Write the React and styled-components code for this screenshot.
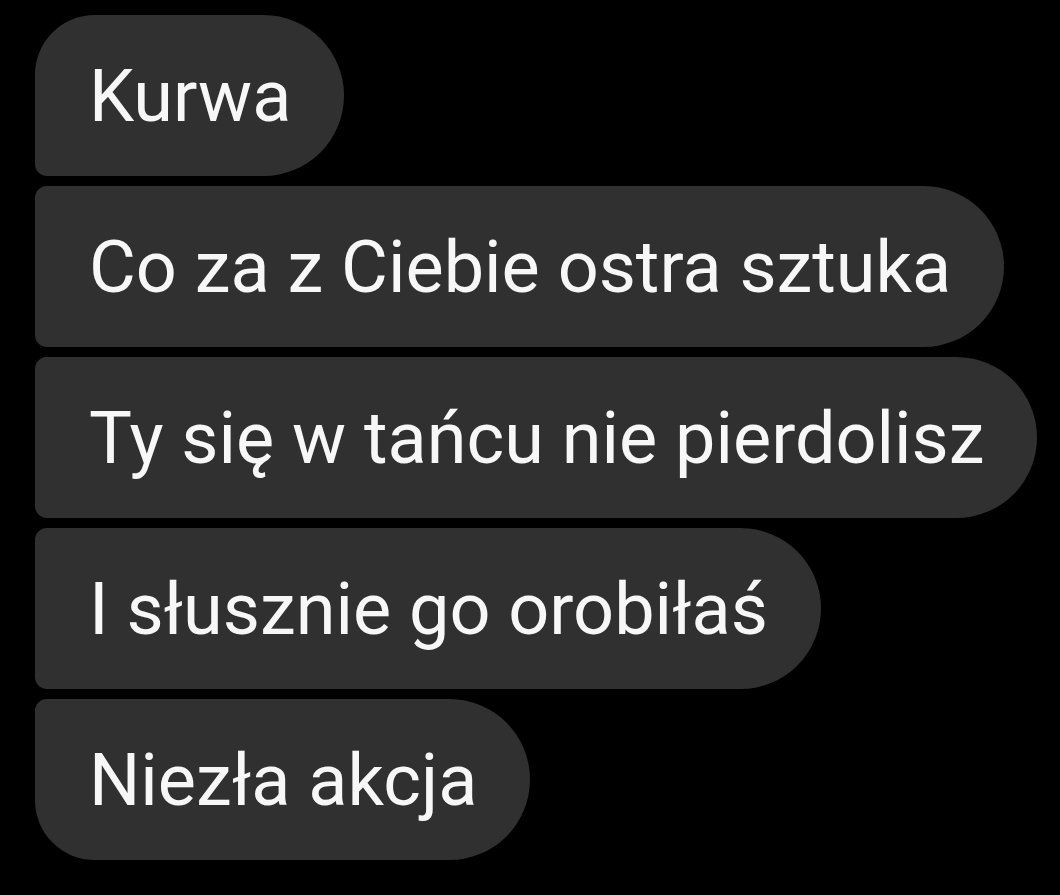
import React from "react";
import styled, { createGlobalStyle } from "styled-components";

const Global = createGlobalStyle`
  html, body { margin: 0; padding: 0; background: #000; }
  body { width: 1060px; height: 895px; overflow: hidden; }
`;

const Thread = styled.div`
  display: flex;
  flex-direction: column;
  align-items: flex-start;
  gap: 10px;
  padding: 15px 0 0 35px;
  background: #000;
  min-height: 895px;
  box-sizing: border-box;
`;

const Bubble = styled.div`
  display: flex;
  align-items: center;
  height: 161px;
  box-sizing: border-box;
  padding: 3px 53px 0 54px;
  background: #303030;
  color: #f7f7f7;
  font-family: Roboto, "Noto Sans", sans-serif;
  font-size: 72px;
  line-height: 1;
  white-space: nowrap;
  border-radius: ${(p) => (p.$first ? "60px" : "12px")} 81px 81px
    ${(p) => (p.$last ? "60px" : "12px")};
`;

const messages = [
  "Kurwa",
  "Co za z Ciebie ostra sztuka",
  "Ty się w tańcu nie pierdolisz",
  "I słusznie go orobiłaś",
  "Niezła akcja",
];

export default function App() {
  return (
    <>
      <Global />
      <Thread>
        {messages.map((m, i) => (
          <Bubble key={i} $first={i === 0} $last={i === messages.length - 1}>
            {m}
          </Bubble>
        ))}
      </Thread>
    </>
  );
}
